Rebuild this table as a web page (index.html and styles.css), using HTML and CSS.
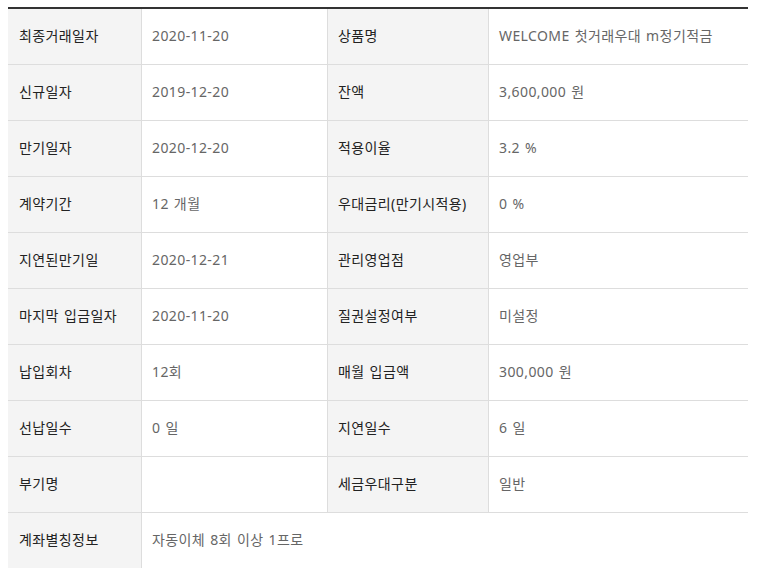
FILE: index.html
```html
<!DOCTYPE html>
<html lang="ko">
<head>
<meta charset="utf-8">
<link rel="stylesheet" href="styles.css">
</head>
<body>
<div class="wrap">
  <div class="info-grid">
    <div class="cell label">최종거래일자</div><div class="cell value">2020-11-20</div><div class="cell label">상품명</div><div class="cell value">WELCOME 첫거래우대 m정기적금</div>
    <div class="cell label">신규일자</div><div class="cell value">2019-12-20</div><div class="cell label">잔액</div><div class="cell value">3,600,000 원</div>
    <div class="cell label">만기일자</div><div class="cell value">2020-12-20</div><div class="cell label">적용이율</div><div class="cell value">3.2 %</div>
    <div class="cell label">계약기간</div><div class="cell value">12 개월</div><div class="cell label">우대금리(만기시적용)</div><div class="cell value">0 %</div>
    <div class="cell label">지연된만기일</div><div class="cell value">2020-12-21</div><div class="cell label">관리영업점</div><div class="cell value">영업부</div>
    <div class="cell label">마지막 입금일자</div><div class="cell value">2020-11-20</div><div class="cell label">질권설정여부</div><div class="cell value">미설정</div>
    <div class="cell label">납입회차</div><div class="cell value">12회</div><div class="cell label">매월 입금액</div><div class="cell value">300,000 원</div>
    <div class="cell label">선납일수</div><div class="cell value">0 일</div><div class="cell label">지연일수</div><div class="cell value">6 일</div>
    <div class="cell label">부기명</div><div class="cell value"></div><div class="cell label">세금우대구분</div><div class="cell value">일반</div>
    <div class="cell label">계좌별칭정보</div><div class="cell value span3">자동이체 8회 이상 1프로</div>
  </div>
</div>
</body>
</html>
```

FILE: styles.css
```css
html, body {
  margin: 0;
  padding: 0;
  background: #fff;
}
body {
  font-family: "Noto Sans", "Noto Sans CJK KR", sans-serif;
  font-size: 14px;
}
.wrap {
  padding: 7px 0 0 8px;
  width: 740px;
}
.info-grid {
  display: grid;
  grid-template-columns: 133px 186px 161px 260px;
  border-top: 2px solid #333;
}
.cell {
  box-sizing: border-box;
  height: 56px;
  border-bottom: 1px solid #ddd;
  border-left: 1px solid #ddd;
  padding: 0 10px 3px;
  display: flex;
  align-items: center;
  white-space: nowrap;
  letter-spacing: 0.4px;
  word-spacing: 1px;
}
.cell:nth-child(4n+1) {
  border-left: none;
  padding-left: 11px;
}
.label {
  background: #f4f4f4;
  color: #222;
}
.value {
  background: #fff;
  color: #666;
}
.span3 {
  grid-column: span 3;
}
```
